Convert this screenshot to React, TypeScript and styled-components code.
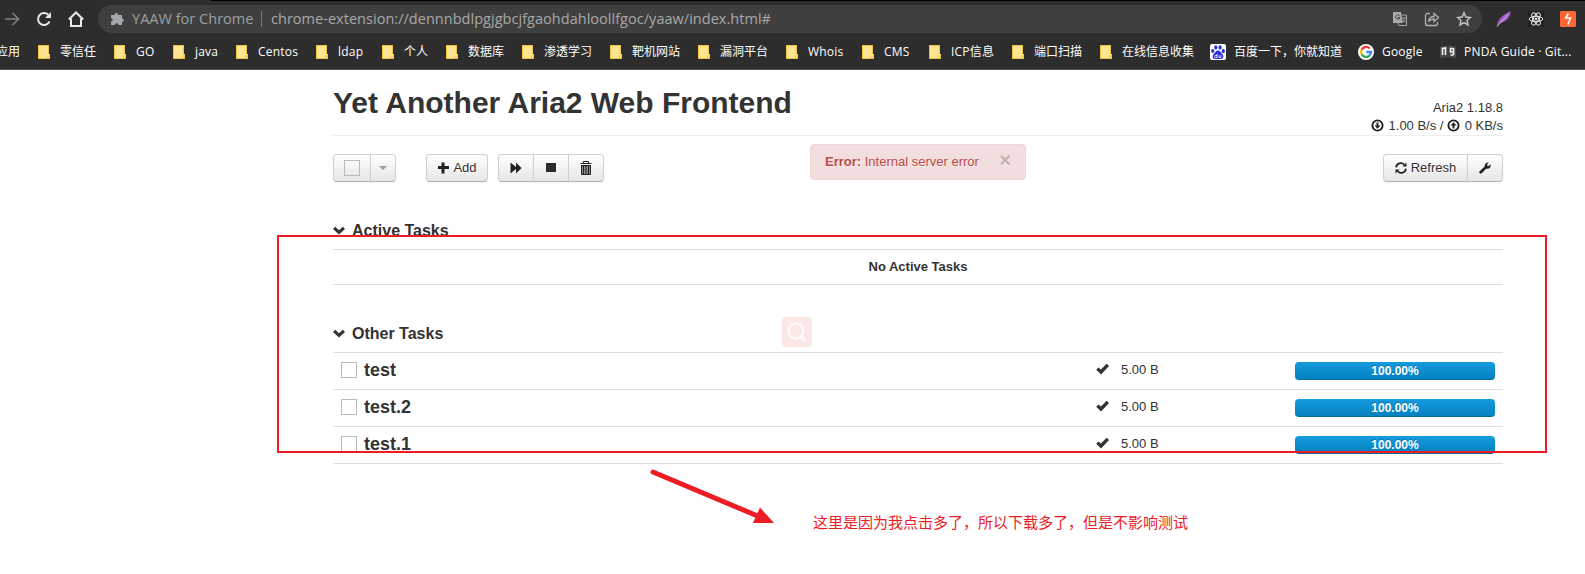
import React from 'react';
import styled, { createGlobalStyle } from 'styled-components';

const Global = createGlobalStyle`
  *, *::before, *::after { box-sizing: border-box; }
  body { margin: 0; background: #fff; overflow: hidden; }
`;
const arial = `"Liberation Sans", Arial, sans-serif`;
const ui = `"Open Sans", "Noto Sans CJK SC", sans-serif`;

const Page = styled.div`
  position: relative; width: 1585px; height: 574px; overflow: hidden;
  font: 13px/18px ${arial}; color: #333; background: #fff;
`;
const Chrome = styled.header`
  height: 70px; background: #2d2d2d; border-bottom: 1px solid #555; overflow: hidden;
`;
const TabEdge = styled.div`height: 1px; margin-left: 211px; background: #000;`;
const NavRow = styled.div`display: flex; align-items: center; height: 36px;`;
const NavIcons = styled.div`
  display: flex; align-items: center; gap: 16px; width: 98px; padding-left: 4px; flex: none;
`;
const Omnibox = styled.div`
  display: flex; align-items: center; width: 1384px; height: 28px; flex: none;
  padding: 0 10px 0 12px; border-radius: 14px; background: #3f3f3f; color: #9aa0a6;
  font: 14.5px/28px ${ui}; white-space: nowrap;
`;
const ExtName = styled.span`width: 121px; margin-left: 8px; letter-spacing: 0.02px;`;
const Bar = styled.i`width: 1px; height: 16px; margin: 0 9px 0 8px; background: #777;`;
const Url = styled.span`flex: 1; color: #a8a8a8; letter-spacing: 0.03px;`;
const OmniIcons = styled.div`display: flex; gap: 16px;`;
const Extensions = styled.div`display: flex; gap: 16px; margin-left: 14px;`;
const Bookmarks = styled.nav`
  display: flex; align-items: center; height: 30px; color: #fff; white-space: nowrap;
  font: 12px/16px ${ui};
`;
const Mark = styled.div<{ $w: number; $wide?: boolean }>`
  display: flex; align-items: center; gap: 8px; width: ${p => p.$w}px; flex: none;
  letter-spacing: ${p => (p.$wide ? '0.2px' : 'normal')};
`;
const AppsMark = styled.span`width: 36px; flex: none; margin-left: -4px; margin-right: 4px;`;

const Main = styled.main`width: 1170px; margin-left: 333px;`;
const Header = styled.div`
  display: flex; justify-content: space-between; height: 66px; border-bottom: 1px solid #eee;
`;
const Title = styled.h1`margin: 15px 0 0; font: bold 30px/36px ${arial};`;
const Stats = styled.div`margin-top: 29px; text-align: right;`;
const StatIcon = styled.svg`width: 13px; height: 13px; vertical-align: -2px; margin-right: 1px;`;
const Toolbar = styled.div`display: flex; height: 46px; padding-top: 18px; align-items: flex-start;`;
const Group = styled.div<{ $left?: number }>`display: flex; margin-left: ${p => p.$left ?? 0}px;`;
const Button = styled.button<{ $w: number; $dim?: boolean }>`
  display: flex; align-items: center; justify-content: center; gap: 4px;
  width: ${p => p.$w}px; height: 28px; padding: 0 0 1px; margin: 0 0 0 -1px;
  font: 13px/18px ${arial}; color: #333; text-shadow: 0 1px 1px rgba(255,255,255,.75);
  background: linear-gradient(#fff, #e6e6e6); border: 1px solid #d0d0d0; border-bottom-color: #b3b3b3;
  box-shadow: inset 0 1px 0 rgba(255,255,255,.2), 0 1px 2px rgba(0,0,0,.05);
  &:first-child { margin-left: 0; border-radius: 4px 0 0 4px; }
  &:last-child { border-radius: 0 4px 4px 0; }
  &:only-child { border-radius: 4px; }
  svg { opacity: ${p => (p.$dim ? 0.35 : 1)}; }
`;
const Box = styled.span`width: 16px; height: 16px; flex: none; border: 1px solid #bbb;`;
const Alert = styled.div`
  display: flex; width: 216px; height: 36px; margin: -10px 0 0 206px; padding: 8px 14px;
  border: 1px solid #eed3d7; border-radius: 4px; background: #f2dede; color: #b94a48;
  text-shadow: 0 1px 0 rgba(255,255,255,.5);
`;
const Close = styled.span`
  margin: -2px 0 0 auto; font: bold 20px/18px ${arial}; color: #c3b2b2;
`;
const Section = styled.section`margin-top: 38px;`;
const SectionTitle = styled.h3`
  display: flex; align-items: center; gap: 7px; margin: 0; height: 29px; padding-bottom: 7px;
  font: bold 16px/22px ${arial};
  svg { margin-top: -2px; }
`;
const Empty = styled.div`
  height: 36px; border: solid #ddd; border-width: 1px 0; text-align: center;
  font-weight: bold; line-height: 34px;
`;
const Rows = styled.div`border-bottom: 1px solid #ddd;`;
const Row = styled.div`
  display: grid; grid-template-columns: 23px 732px 25px 174px 200px; height: 37px;
  padding: 9px 8px 0; border-top: 1px solid #ddd; align-items: start;
  svg { margin-top: 1px; }
`;
const Name = styled.strong`font-size: 18px; line-height: 16px;`;
const Size = styled.span`line-height: 16px;`;
const Progress = styled.div`
  height: 18px; border-radius: 4px; background: linear-gradient(#149bdf, #0480be);
  box-shadow: inset 0 -1px 0 rgba(0,0,0,.15); color: #fff; text-align: center;
  font: bold 12px/18px ${arial}; text-shadow: 0 -1px 0 rgba(0,0,0,.25);
`;
const RedFrame = styled.div`
  position: absolute; left: 277px; top: 235px; width: 1270px; height: 218px; border: 2px solid #ed1c24;
`;
const Arrow = styled.svg`position: absolute; left: 645px; top: 465px;`;
const Note = styled.div`
  position: absolute; left: 813px; top: 511px; font: 15px/22px "Noto Sans CJK SC", sans-serif;
  color: #ed1c24; white-space: nowrap;
`;
const SearchBadge = styled.div`
  position: absolute; left: 782px; top: 317px; width: 30px; height: 30px; border-radius: 4px;
  background: #fde8e8; display: grid; place-items: center;
`;

const Folder = () => (
  <svg width="16" height="16" viewBox="0 0 16 16">
    <path d="M2 1h11v9h1v5H2z" fill="#ffe591" />
    <path d="M2.500 14.500v-13h10V10M2 14.500h11.500V11M12 11v3" fill="none" stroke="#edc23c" />
  </svg>
);
const Baidu = () => (
  <svg width="16" height="16" viewBox="0 0 16 16">
    <rect width="16" height="16" rx="2" fill="#fff" />
    <g fill="#2932e1">
      <ellipse cx="2.7" cy="7" rx="1.6" ry="2.1" /><ellipse cx="5.8" cy="3.4" rx="1.6" ry="2.2" />
      <ellipse cx="10.1" cy="3.4" rx="1.6" ry="2.2" /><ellipse cx="13.3" cy="7.2" rx="1.6" ry="2.1" />
      <path d="M8 6.6c2 0 2.400 1.800 4 3.200 2.300 2 1.600 5.200-1 5.200H5c-2.600 0-3.300-3.200-1-5.200C5.600 8.400 6 6.600 8 6.600z" />
    </g>
    <path d="M7 10v3.500H5.500a1 1 0 010-2H7M9 11.200v2.300h2v-2.300" fill="none" stroke="#fff" strokeWidth=".8" />
  </svg>
);
const Google = () => (
  <svg width="16" height="16" viewBox="0 0 16 16">
    <circle cx="8" cy="8" r="8" fill="#fff" />
    <g fill="none" strokeWidth="2.300">
      <path d="M11.700 4.500A5 5 0 003.600 5.700" stroke="#ea4335" />
      <path d="M3.600 5.700a5 5 0 000 4.600" stroke="#fbbc05" />
      <path d="M3.600 10.300a5 5 0 007.800 1.400" stroke="#34a853" />
      <path d="M11.400 11.700A5 5 0 0013 8H8.200" stroke="#4285f4" />
    </g>
  </svg>
);
const Book = () => (
  <svg width="16" height="16" viewBox="0 0 16 16">
    <path d="M0 2.500L7.500 1.500v12L0 14zM16 2.500L8.500 1.500v12L16 14z" fill="#4a4a4a" />
    <path d="M2.500 11V4.500l3-.5v7M13.500 4v7M13.500 4.500h-3V8h3M10.500 11h3" fill="none" stroke="#eee" strokeWidth="1.600" />
  </svg>
);

const marks: [string, number, React.FC][] = [
  ['零信任', 76, Folder], ['GO', 59, Folder], ['java', 63, Folder], ['Centos', 80, Folder],
  ['ldap', 66, Folder], ['个人', 64, Folder], ['数据库', 76, Folder], ['渗透学习', 88, Folder],
  ['靶机网站', 88, Folder], ['漏洞平台', 88, Folder], ['Whois', 76, Folder], ['CMS', 67, Folder],
  ['ICP信息', 83, Folder], ['端口扫描', 88, Folder], ['在线信息收集', 112, Folder],
  ['百度一下，你就知道', 148, Baidu], ['Google', 82, Google], ['PNDA Guide · Git...', 140, Book],
];

const Chevron = () => (
  <svg width="12" height="9" viewBox="0 0 12 9"><path d="M0 3l2.200-2.200L6 4.300 9.800.800 12 3 6 8.600z" fill="#333" /></svg>
);
const Check = () => (
  <svg width="14" height="12" viewBox="0 0 14 12"><path d="M.200 6.800l2.200-2.200 2.500 2L10.700.800 13 3 5.100 11.500z" fill="#333" /></svg>
);
const Speed = ({ up }: { up?: boolean }) => (
  <StatIcon viewBox="0 0 13 13">
    <circle cx="6.500" cy="6.500" r="5.100" fill="none" stroke="#222" strokeWidth="1.900" />
    <path d="M5.500 3.500h2V6.500H9.500L6.500 9.800 3.500 6.500h2z" fill="#222" transform={up ? 'rotate(180 6.500 6.500)' : undefined} />
  </StatIcon>
);

export default function App() {
  return (
    <Page>
      <Global />
      <Chrome>
        <TabEdge />
        <NavRow>
          <NavIcons>
            <svg width="16" height="16" viewBox="0 0 16 16" fill="none" stroke="#808080" strokeWidth="1.600"><path d="M1 8h13M8.500 2l6 6-6 6" /></svg>
            <svg width="16" height="16" viewBox="0 0 16 16" fill="none" stroke="#e8e8e8" strokeWidth="2"><path d="M13.500 10.500A6 6 0 1 1 12.300 3.800" /><path d="M15 1v6H9z" fill="#e8e8e8" stroke="none" /></svg>
            <svg width="16" height="16" viewBox="0 0 16 16" fill="none" stroke="#e8e8e8" strokeWidth="2"><path d="M.800 8.500L8 1.500l7.200 7M3 7.500V15h10V7.500" /></svg>
          </NavIcons>
          <Omnibox>
            <svg width="14" height="14" viewBox="0 0 14 14"><path d="M1 3h3.500a1.900 1.900 0 113.800 0H12v3.500a1.800 1.800 0 110 3.600V13H8.500a1.800 1.800 0 10-3.600 0H1V9.500a1.700 1.700 0 100-3.400z" fill="#a3a8ad" /></svg>
            <ExtName>YAAW for Chrome</ExtName><Bar />
            <Url>chrome-extension://dennnbdlpgjgbcjfgaohdahloollfgoc/yaaw/index.html#</Url>
            <OmniIcons>
              <svg width="16" height="16" viewBox="0 0 16 16"><path d="M1 1h8l2 11H1z" fill="#aaa" /><path d="M10 4h4.500v10.500H7L6 12" fill="none" stroke="#aaa" /><path d="M7.500 4.500a2.200 2.200 0 10.500 2H6" fill="none" stroke="#3f3f3f" /><path d="M10 7h4M12 6v1M13 7.500c-.5 2-1.500 3-2.500 4M11 8.500l2.500 3" fill="none" stroke="#aaa" strokeWidth=".8" /></svg>
              <svg width="16" height="16" viewBox="0 0 16 16" fill="none" stroke="#b0b0b0" strokeWidth="1.300"><path d="M6 2.500H3.500a2 2 0 00-2 2v8a2 2 0 002 2h8a2 2 0 002-2V11M4.500 10.500C5 7 7 5.500 10 5.500V2.500L14.500 6.500 10 10.500v-2.500c-2.500 0-4 .5-5.500 2.500z" /></svg>
              <svg width="16" height="16" viewBox="0 0 16 16" fill="none" stroke="#c4c4c4" strokeWidth="1.500"><path d="M8 1.800l1.900 4.200 4.500.5-3.400 3 1 4.500-4-2.400L4 14l1-4.500-3.400-3 4.500-.5z" /></svg>
            </OmniIcons>
          </Omnibox>
          <Extensions>
            <svg width="16" height="16" viewBox="0 0 16 16"><path d="M1 15.500C1.500 8 7 3.500 14.500.300c0 6-4 10.500-10.500 11.700z" fill="#a05cc4" /><path d="M1 15.500L12 3.500" stroke="#e0b8f0" /></svg>
            <svg width="16" height="16" viewBox="0 0 16 16" fill="none" stroke="#eee"><rect width="16" height="16" fill="#222" stroke="none" /><ellipse cx="8" cy="8" rx="6.800" ry="2.700" /><ellipse cx="8" cy="8" rx="6.800" ry="2.700" transform="rotate(60 8 8)" /><ellipse cx="8" cy="8" rx="6.800" ry="2.700" transform="rotate(120 8 8)" /><circle cx="8" cy="8" r="1" fill="#eee" /></svg>
            <svg width="16" height="16" viewBox="0 0 16 16"><rect width="16" height="16" rx="1.500" fill="#ff6633" /><path d="M8.300 2.500L5.800 7h4.600L8 13.500" fill="none" stroke="#fff" strokeWidth="1.600" /></svg>
          </Extensions>
        </NavRow>
        <Bookmarks>
          <AppsMark>应用</AppsMark>
          {marks.map(([label, w, Icon]) => (
            <Mark key={label} $w={w} $wide={/^[A-Za-z]/.test(label)}><Icon />{label}</Mark>
          ))}
        </Bookmarks>
      </Chrome>
      <Main>
        <Header>
          <Title>Yet Another Aria2 Web Frontend</Title>
          <Stats>
            <div>Aria2 1.18.8</div>
            <div><Speed /> 1.00 B/s / <Speed up /> 0 KB/s</div>
          </Stats>
        </Header>
        <Toolbar>
          <Group>
            <Button $w={38}><Box /></Button>
            <Button $w={26} $dim><svg width="8" height="4" viewBox="0 0 8 4"><path d="M0 0h8L4 4z" /></svg></Button>
          </Group>
          <Group $left={30}>
            <Button $w={62}><svg width="12" height="12" viewBox="0 0 12 12"><path d="M4.500.500h3V4H12v3H7.500v4.500h-3V7H1V4h3.500z" fill="#222" /></svg>Add</Button>
          </Group>
          <Group $left={10}>
            <Button $w={36}><svg width="12" height="12" viewBox="0 0 12 12"><path d="M.500.500L6 5V.500L11.500 6 6 11.500V7L.500 11.500z" fill="#222" /></svg></Button>
            <Button $w={36}><svg width="10" height="10"><rect width="10" height="9" fill="#2b2b2b" /></svg></Button>
            <Button $w={36}><svg width="12" height="14" viewBox="0 0 12 14" fill="none" stroke="#222"><path d="M1 4h10v9.500H1z" fill="#8a8a8a" stroke="none" /><path d="M3.500 2V.500h5V2M.500 2.500h11M1.500 4v9.500h9V4M1.500 4.500h9M3.500 5v8M6 5v8M8.500 5v8" /></svg></Button>
          </Group>
          <Alert><span><b>Error:</b> Internal server error</span><Close>×</Close></Alert>
          <Group $left={357}>
            <Button $w={85}><svg width="12" height="12" viewBox="0 0 13 13" fill="none" stroke="#222" strokeWidth="1.900"><path d="M1.200 5.800A5 5 0 0110 3M11.800 7.200A5 5 0 013 10" /><path d="M12.500.500V5H8zM.500 12.500V8H5z" fill="#222" stroke="none" /></svg>Refresh</Button>
            <Button $w={36}><svg width="12" height="12" viewBox="0 0 13 13"><path d="M1.800 11.200L8 5" stroke="#222" strokeWidth="3" strokeLinecap="round" /><path d="M10.500.700L8.700 2.600l.3 1.500 1.500.3 1.900-1.900c.8 2-.6 4.700-3 4.700-2 0-3.600-1.800-3.100-3.700C6.700 1.500 8.700.200 10.500.700z" fill="#222" /></svg></Button>
          </Group>
        </Toolbar>
        <Section>
          <SectionTitle><Chevron />Active Tasks</SectionTitle>
          <Empty>No Active Tasks</Empty>
        </Section>
        <Section>
          <SectionTitle><Chevron />Other Tasks</SectionTitle>
          <Rows>
            {['test', 'test.2', 'test.1'].map(name => (
              <Row key={name}><Box /><Name>{name}</Name><Check /><Size>5.00 B</Size><Progress>100.00%</Progress></Row>
            ))}
          </Rows>
        </Section>
      </Main>
      <SearchBadge>
        <svg width="20" height="20" viewBox="0 0 20 20" fill="none" stroke="#fff" strokeWidth="1.800"><circle cx="9" cy="9" r="7.500" /><path d="M14 14.500l3 3" strokeWidth="3.500" strokeLinecap="round" /><path d="M14.500 15l2 2" stroke="#fde8e8" strokeWidth="1" /></svg>
      </SearchBadge>
      <RedFrame />
      <Arrow width="135" height="65" viewBox="645 465 135 65">
        <path d="M653 472L760 517" stroke="#ed1c24" strokeWidth="5" strokeLinecap="round" />
        <path d="M760 507.500L774 523H753z" fill="#ed1c24" />
      </Arrow>
      <Note>这里是因为我点击多了，所以下载多了，但是不影响测试</Note>
    </Page>
  );
}
